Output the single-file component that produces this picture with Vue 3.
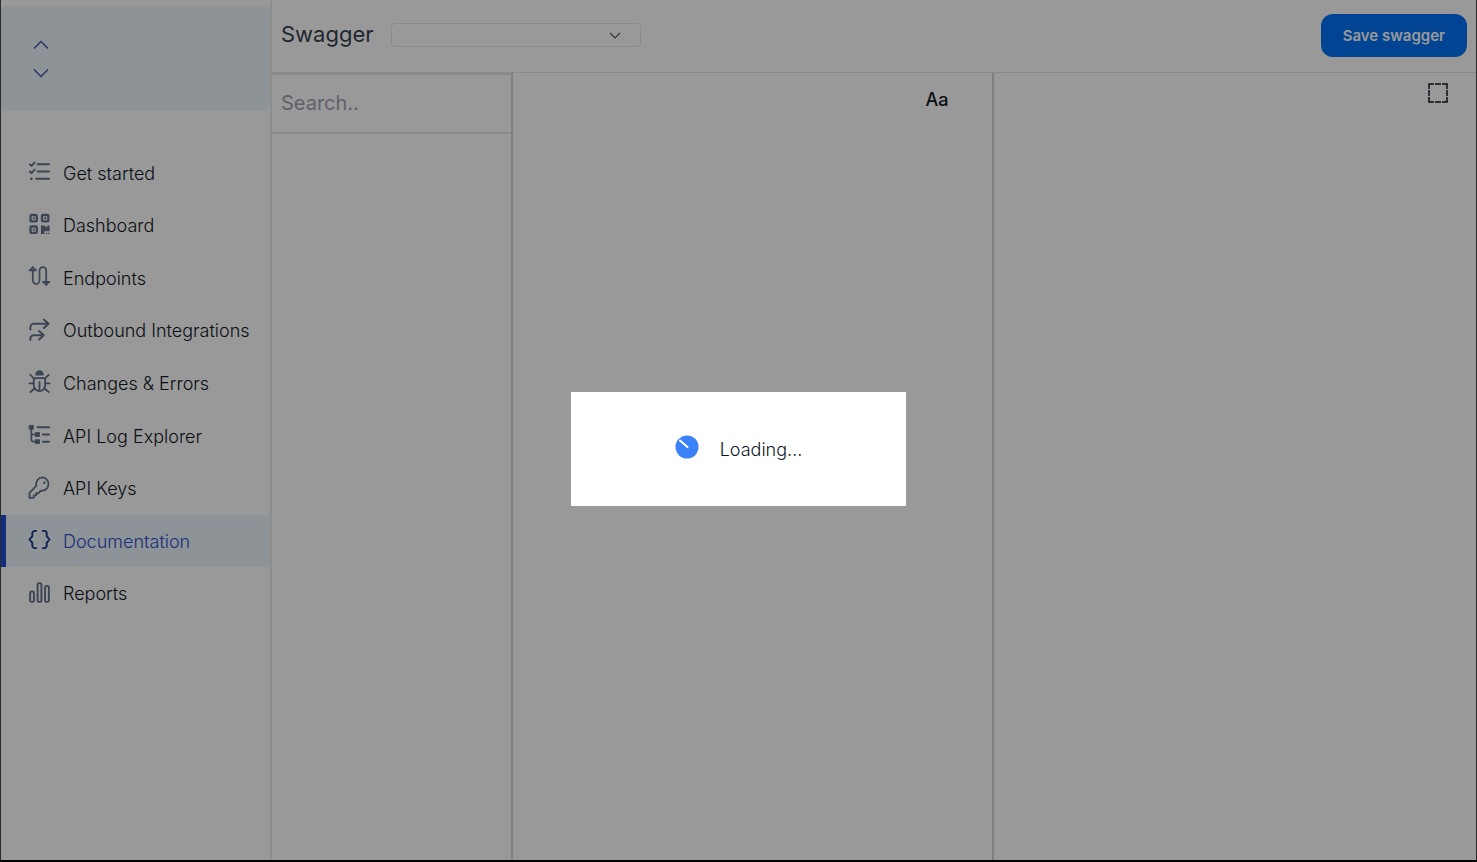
<script setup>
import { ref } from 'vue'

const active = ref('docs')
const search = ref('')
const definition = ref('')

const items = [
  { id: 'start', label: 'Get started' },
  { id: 'dashboard', label: 'Dashboard' },
  { id: 'endpoints', label: 'Endpoints' },
  { id: 'outbound', label: 'Outbound Integrations' },
  { id: 'errors', label: 'Changes & Errors' },
  { id: 'logs', label: 'API Log Explorer' },
  { id: 'keys', label: 'API Keys' },
  { id: 'docs', label: 'Documentation' },
  { id: 'reports', label: 'Reports' },
]
</script>

<template>
  <div class="app">
    <aside class="sidebar">
      <div class="switcher">
        <button class="step" type="button" aria-label="Previous project">
          <svg width="16" height="10" viewBox="0 0 16 10" fill="none" stroke="currentColor" stroke-width="1.3"><path d="M1 8.500 8 1.500l7 7" /></svg>
        </button>
        <button class="step" type="button" aria-label="Next project">
          <svg width="16" height="10" viewBox="0 0 16 10" fill="none" stroke="currentColor" stroke-width="1.3"><path d="m1 1.500 7 7 7-7" /></svg>
        </button>
      </div>

      <nav class="nav">
        <a
          v-for="item in items"
          :key="item.id"
          href="#"
          class="nav-item"
          :class="{ active: item.id === active }"
          @click.prevent="active = item.id"
        >
          <svg class="icon" viewBox="0 0 24 24" fill="none" stroke="currentColor" stroke-width="2" stroke-linecap="round" stroke-linejoin="round" aria-hidden="true">
            <g v-if="item.id === 'start'">
              <path d="M10 4.500h12M10 12h12M8.500 19.500H22" />
              <path d="m2 4.500 1.700 1.700L7 2.500M2 12l1.700 1.700L7 10" />
              <circle cx="3.500" cy="19.500" r="1.300" fill="currentColor" stroke="none" />
            </g>
            <g v-else-if="item.id === 'dashboard'" stroke-width="2.400">
              <rect x="2.600" y="2.100" width="6.600" height="6.600" rx="1" />
              <rect x="14.600" y="2.100" width="6.600" height="6.600" rx="1" />
              <rect x="2.600" y="14.100" width="6.600" height="6.600" rx="1" />
              <path d="M5 4.500h2v2H5zM17 4.500h2v2h-2zM5 16.500h2v2H5z" fill="currentColor" stroke="none" />
              <path d="M13.500 13h4l1.500 1.800h1V13h2.500v6H17v3h-3.500zM18.500 20.500h1.500V22h-1.500zM21 20.500h1.500V22H21z" fill="currentColor" stroke="none" />
            </g>
            <g v-else-if="item.id === 'endpoints'" stroke-width="1.800">
              <path d="M1.600 5.500C3 4.800 4 3.500 5 2c1 1.500 2 2.800 3.400 3.500zM15.600 17.500c1.400.7 2.400 2 3.400 3.500 1-1.500 2-2.800 3.400-3.500z" />
              <path d="M5 5.500v10.800a3.500 3.500 0 0 0 7 0V5.800a3.500 3.500 0 0 1 7 0v11.700" />
            </g>
            <g v-else-if="item.id === 'outbound'">
              <path d="M2.500 12V9.500A3.500 3.500 0 0 1 6 6h15.500M16.500 1.500 21.500 6l-5 4.500" />
              <path d="M2.500 23v-1.500A3.500 3.500 0 0 1 6 18h10.500M11.500 13.500l5 4.500-5 4.500" />
            </g>
            <g v-else-if="item.id === 'errors'" stroke-width="1.900">
              <path d="M8.500 4.800a3.500 3.500 0 0 1 7 0z" fill="currentColor" />
              <path d="M8 8.500h8a2 2 0 0 1 2 2V16a6 6 0 0 1-12 0v-5.500a2 2 0 0 1 2-2zM12 12.500V21" />
              <path d="M1.500 14H6M18 14h4.500M2.500 5l4.200 4.200M21.500 5l-4.200 4.200M2.500 23l4.500-4M21.500 23 17 19" />
            </g>
            <g v-else-if="item.id === 'logs'">
              <path d="M10 4.500h12M15.500 12H22M15.500 19.500H22" />
              <path d="M3.500 4v13a2.500 2.500 0 0 0 2.500 2.500h3M3.500 12H9" stroke-width="1.800" />
              <path d="M1.500 2.500h4v4h-4zM8 10h4v4H8zM8 17.500h4v4H8z" fill="currentColor" stroke-width="1" />
            </g>
            <g v-else-if="item.id === 'keys'" stroke-width="1.900">
              <path d="M15.500 1.500a7 7 0 0 0-6.800 8.800L1.500 17.500v5.300H6v-2.500h2.500V18H11l2.200-2.600a7 7 0 1 0 2.300-13.900z" />
              <circle cx="17" cy="7" r="1.300" fill="currentColor" stroke="none" />
            </g>
            <g v-else-if="item.id === 'docs'" stroke-width="2">
              <path d="M8.500 3H7a2.500 2.500 0 0 0-2.500 2.500v3L1.500 12l3 3.500v3A2.500 2.500 0 0 0 7 21h1.500" />
              <path d="M15.500 3H17a2.500 2.500 0 0 1 2.500 2.500v3l3 3.500-3 3.500v3A2.500 2.500 0 0 1 17 21h-1.500" />
            </g>
            <g v-else stroke-width="2">
              <rect x="2.200" y="11" width="4" height="10.800" rx="1.500" />
              <rect x="10" y="2.200" width="4" height="19.600" rx="1.500" />
              <rect x="17.800" y="5.200" width="4" height="16.600" rx="1.500" />
            </g>
          </svg>
          <span>{{ item.label }}</span>
        </a>
      </nav>
    </aside>

    <main class="main">
      <header class="toolbar">
        <label class="title" for="definition">Swagger</label>
        <div class="picker">
          <select id="definition" v-model="definition">
            <option value=""></option>
          </select>
          <svg class="caret" width="12" height="8" viewBox="0 0 12 8" fill="none" stroke="currentColor" stroke-width="1.200"><path d="m1 1 5 5 5-5" /></svg>
        </div>
        <button class="save" type="button">Save swagger</button>
      </header>

      <div class="panes">
        <section class="pane tree">
          <input v-model="search" class="search" type="text" placeholder="Search.." aria-label="Search" />
        </section>
        <section class="pane editor">
          <button class="case" type="button" aria-label="Font size">Aa</button>
        </section>
        <section class="pane preview">
          <button class="expand" type="button" aria-label="Full screen">
            <svg width="20" height="20" viewBox="0 0 20 20" fill="none" stroke="currentColor" stroke-width="1.500">
              <path d="M1 6V1h5M7 1h6M14 1h5v5M19 7v6M19 14v5h-5M13 19H7M6 19H1v-5M1 13V7" />
            </svg>
          </button>
        </section>
      </div>
    </main>

    <div class="overlay">
      <div class="dialog" role="status">
        <svg class="spinner" width="24" height="24" viewBox="0 0 24 24" aria-hidden="true">
          <circle cx="12" cy="12" r="11.500" fill="#3b82f6" />
          <path d="m5 5.500 7.500 6.500" stroke="#fff" stroke-width="2" stroke-linecap="round" />
        </svg>
        <span>Loading...</span>
      </div>
    </div>
  </div>
</template>

<style>
body {
  background: #000;
}
</style>

<style scoped>
.app {
  position: relative;
  display: flex;
  box-sizing: border-box;
  min-height: 100vh;
  border: solid #2b2b2b;
  border-width: 0 1px;
  border-bottom: 2px solid #000;
  background: #fff;
  color: #111827;
  font-family: Inter, "Liberation Sans", sans-serif;
  font-size: 18px;
}
button,
input,
select {
  margin: 0;
  padding: 0;
  border: 0;
  background: none;
  color: inherit;
  font: inherit;
}
.sidebar {
  flex: none;
  width: 269px;
  padding-top: 6px;
  border-right: 2px solid #ebebeb;
}
.switcher {
  display: flex;
  flex-direction: column;
  align-items: flex-start;
  justify-content: center;
  gap: 18px;
  box-sizing: border-box;
  height: 105px;
  padding-left: 32px;
  border-radius: 6px;
  background: #ebf5fb;
  color: #3f51a3;
}
.step,
.step svg {
  display: block;
}
.nav {
  display: grid;
  grid-auto-rows: 1fr;
  min-height: 473px;
  margin-top: 36px;
}
.nav-item {
  display: flex;
  align-items: center;
  gap: 12px;
  padding-left: 22px;
  border-left: 5px solid transparent;
  color: #111827;
  font-weight: 300;
  text-decoration: none;
}
.icon {
  flex: none;
  width: 23px;
  height: 23px;
  margin-bottom: 3px;
  color: #64748b;
}
.nav-item.active {
  border-color: #1d4ed8;
  background: #ebf5fb;
  color: #2f4fd0;
}
.active .icon {
  color: #1e3a8a;
}
.main {
  display: flex;
  flex: 1;
  flex-direction: column;
  min-width: 0;
}
.toolbar {
  display: flex;
  align-items: center;
  box-sizing: border-box;
  height: 73px;
  padding: 0 9px 2px;
  border-bottom: 1px solid #e5e7eb;
}
.title {
  margin: 0 17px 2px 0;
  color: #374151;
  font-size: 22px;
}
.picker {
  position: relative;
  width: 250px;
}
.picker select {
  display: block;
  appearance: none;
  box-sizing: border-box;
  width: 100%;
  height: 24px;
  border: 1px solid #e5e7eb;
  border-radius: 4px;
}
.caret {
  position: absolute;
  top: 9px;
  right: 20px;
  color: #4b5563;
  pointer-events: none;
}
.save {
  height: 43px;
  margin-left: auto;
  padding: 0 22px;
  border-radius: 12px;
  background: #0072f5;
  color: #fff;
  font-size: 15px;
  font-weight: 600;
}
.panes {
  display: grid;
  flex: 1;
  grid-template-columns: 1fr 2fr 2fr;
}
.pane {
  min-width: 0;
}
.tree,
.editor {
  border-right: 2px solid #d1d5db;
}
.search {
  display: block;
  box-sizing: border-box;
  width: 100%;
  height: 61px;
  padding: 0 9px 2px;
  border: solid #e5e7eb;
  border-width: 2px 0;
  font-size: 20px;
}
.search::placeholder {
  color: #9ca3af;
  opacity: 1;
}
.editor,
.preview {
  display: flex;
  align-items: flex-start;
  justify-content: flex-end;
}
.case {
  margin: 16px 44px 0 0;
  font-weight: 500;
}
.expand {
  margin: 10px 28px 0 0;
}
.expand svg {
  display: block;
}
.overlay {
  position: absolute;
  inset: 0;
  display: flex;
  align-items: center;
  justify-content: center;
  padding-top: 38px;
  background: rgba(0, 0, 0, 0.4);
}
.dialog {
  display: flex;
  align-items: center;
  justify-content: center;
  gap: 21px;
  width: 335px;
  height: 114px;
  background: #fff;
  font-weight: 300;
}
.spinner {
  margin-bottom: 4px;
}
</style>
